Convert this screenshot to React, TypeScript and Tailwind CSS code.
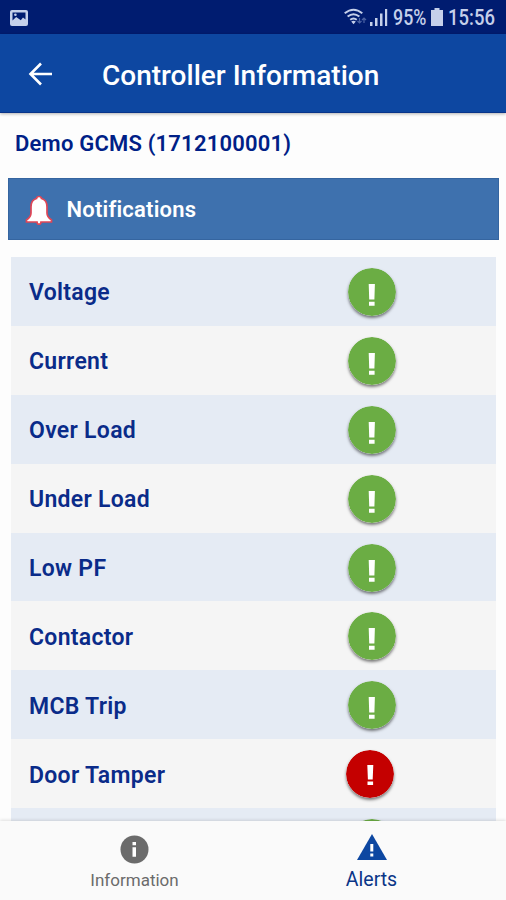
import React, { useState } from 'react';

type Alert = {
  name: string;
  ok: boolean;
};

const alerts: Alert[] = [
  { name: 'Voltage', ok: true },
  { name: 'Current', ok: true },
  { name: 'Over Load', ok: true },
  { name: 'Under Load', ok: true },
  { name: 'Low PF', ok: true },
  { name: 'Contactor', ok: true },
  { name: 'MCB Trip', ok: true },
  { name: 'Door Tamper', ok: false },
  { name: '', ok: true },
];

function StatusBar() {
  return (
    <div className="flex h-[34px] shrink-0 items-center bg-[#001c70] pl-2.5 pr-[11px] text-[#c5d0ea]">
      <svg className="mt-px h-4 w-[18px]" viewBox="0 0 18 16">
        <rect width="18" height="16" rx="2" fill="currentColor" />
        <path d="M2.500 2.500h13v7l-2.500-2-2.200 2.700L6.200 7l-3.700 3.600z" fill="#001c70" />
        <circle cx="5.400" cy="4.800" r="1.300" fill="currentColor" />
      </svg>
      <svg className="ml-auto h-[18px] w-[23px]" viewBox="0 0 23 18">
        <g fill="none" stroke="currentColor" strokeWidth="1.900">
          <path d="M.7 5.300q8.800-7.200 17.600 0" />
          <path d="M3.600 8.600q5.900-4.800 11.800 0" />
          <path d="M6.200 11.700q3.300-2.600 6.600 0" />
        </g>
        <path d="M7.200 13.500q2.300-1.600 4.600 0l-2.300 2.700z" fill="currentColor" />
        <path d="M15.500 10v5m-2-2 2 2 2-2M20 15v-5m-2 2 2-2 2 2" fill="none" stroke="#4c64a4" strokeWidth="1.200" />
      </svg>
      <svg className="ml-[3px] h-[18px] w-[18px]" viewBox="0 0 18 18" fill="currentColor">
        <path d="M0 14h2.500v4H0zM5 10h2.500v8H5zM10 5.500h2.500V18H10zM15 1h2.200v17H15z" />
      </svg>
      <span className="ml-[5px] mt-px w-[35px] origin-left scale-x-[0.81] whitespace-nowrap text-[22px] font-medium leading-[34px]">95%</span>
      <svg className="ml-[3px] h-[18px] w-3" viewBox="0 0 12 18" fill="currentColor">
        <path d="M3.500 0h5v2H12v16H0V2h3.500z" />
      </svg>
      <span className="ml-[5px] mt-px w-[47px] origin-left scale-x-[0.84] whitespace-nowrap text-[22px] font-medium leading-[34px]">15:56</span>
    </div>
  );
}

function Header() {
  return (
    <div className="z-10 flex h-[79px] shrink-0 items-center border-b border-[#09348a] bg-[#0d47a1] text-white shadow-[0_1px_3px_rgba(0,0,0,0.3)]">
      <button className="ml-[28px] mt-px h-6 w-6">
        <svg viewBox="0 0 24 24" fill="none" stroke="currentColor" strokeWidth="2.600">
          <path d="M24 12H2.300M13 1.500 2.500 12 13 22.500" />
        </svg>
      </button>
      <h1 className="ml-[50px] mt-1.5 whitespace-nowrap text-[28px] font-medium leading-8">Controller Information</h1>
    </div>
  );
}

function StatusBadge({ ok }: { ok: boolean }) {
  return (
    <svg
      className={
        ok
          ? 'ml-[337px] mt-px h-12 w-12 rounded-full shadow-[0_2px_3px_rgba(0,0,0,0.5)]'
          : 'ml-[335px] h-12 w-12 rounded-full shadow-[0_2px_3px_rgba(0,0,0,0.5)]'
      }
      viewBox="0 0 48 48"
    >
      <circle cx="24" cy="24" r="24" fill={ok ? '#6bad44' : '#c40000'} />
      {ok ? (
        <path d="M20.700 16h6.200l-.5 15.500h-5.200zM21 33.700h5.600v4H21z" fill="#fff" />
      ) : (
        <path d="M21.300 15h6l-.6 14.500h-4.800zM21.500 31.500h5.600V35h-5.600z" fill="#fff" />
      )}
    </svg>
  );
}

function App() {
  const [tab, setTab] = useState('alerts'); // 'information', 'alerts'

  return (
    <div className="flex h-[900px] w-full flex-col overflow-hidden bg-[#fdfdfd] font-['Roboto',sans-serif]">
      <StatusBar />
      <Header />

      <div className="flex min-h-0 flex-1 flex-col overflow-hidden">
        <h2 className="ml-[15px] mt-[15px] whitespace-nowrap text-[22px] font-semibold leading-8 tracking-[0.2px] text-[#001f87]">
          Demo GCMS (1712100001)
        </h2>

        <div className="ml-2 mr-[7px] mt-[18px] flex h-[62px] shrink-0 items-center border border-[#3565a0] bg-[#3e71ae] pl-[16px]">
          <svg className="mt-[3px] h-[31px] w-7" viewBox="0 0 28 31">
            <path
              d="M14 1.500c-1.500 0-2.300.8-2.500 2C7.500 4.500 6 8 6 12v6c0 3.500-1.500 5-4.500 7v2H12c0 3 4 3 4 0h10.500v-2c-3-2-4.500-3.500-4.500-7v-6c0-4-1.500-7.500-5.500-8.500-.2-1.200-1-2-2.500-2z"
              fill="#fff"
              stroke="#df4656"
              strokeWidth="1.700"
            />
          </svg>
          <span className="ml-[13.500px] mt-px text-[22px] font-semibold leading-8 tracking-[0.2px] text-white">Notifications</span>
        </div>

        <div className="ml-[11px] mr-[10px] mt-[17px]">
          {alerts.map((alert, i) => (
            <div
              key={i}
              className="grid h-[68.9px] grid-cols-1 items-center odd:bg-[#e5ebf4] even:bg-[#f5f5f5]"
            >
              <span className="col-start-1 row-start-1 ml-[18px] mt-[4px] whitespace-nowrap text-[23px] font-semibold leading-8 tracking-[0.3px] text-[#0a2b89]">
                {alert.name}
              </span>
              <div className="col-start-1 row-start-1">
                <StatusBadge ok={alert.ok} />
              </div>
            </div>
          ))}
        </div>
      </div>

      <nav className="z-10 flex h-[79px] shrink-0 bg-[#fafafa] shadow-[0_-1px_3px_rgba(0,0,0,0.12)]">
        <button
          onClick={() => setTab('information')}
          className={`ml-4 flex w-[237px] flex-col items-center pt-[14px] ${tab === 'information' ? 'text-[#0d47a1]' : 'text-[#6b6b6b]'}`}
        >
          <svg className="h-[29px] w-[29px]" viewBox="0 0 29 29">
            <circle cx="14.500" cy="14.500" r="14" fill="currentColor" />
            <path d="M12.500 7h3.500v3.300h-3.500zM12.500 12.300h3.500v9.500h-3.500z" fill="#fff" />
          </svg>
          <span className="mt-[5px] whitespace-nowrap text-[17px] leading-[22px]">Information</span>
        </button>
        <button
          onClick={() => setTab('alerts')}
          className={`flex w-[237px] flex-col items-center pt-[13px] ${tab === 'alerts' ? 'text-[#0d47a1]' : 'text-[#6b6b6b]'}`}
        >
          <svg className="h-[26px] w-[30px]" viewBox="0 0 30 26">
            <path d="M15 0l15 26H0z" fill="currentColor" />
            <path d="M13.300 10h3v7.500h-3zM13.300 19.500h3v3h-3z" fill="#fff" />
          </svg>
          <span className="mt-[9px] whitespace-nowrap text-[19.500px] leading-[22px] text-[#0a3587]">Alerts</span>
        </button>
      </nav>
    </div>
  );
}

export default App;
